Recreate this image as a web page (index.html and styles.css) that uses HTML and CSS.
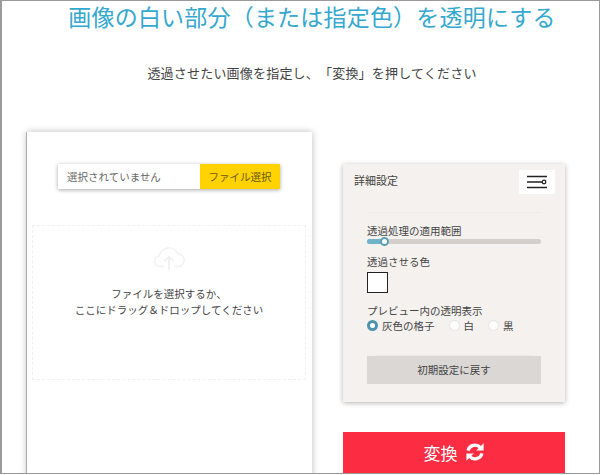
FILE: index.html
```html
<!DOCTYPE html>
<html lang="ja">
<head>
<meta charset="utf-8">
<title>画像の白い部分を透明にする</title>
<link rel="stylesheet" href="styles.css">
</head>
<body>
<div class="frame">
  <h1 class="title">画像の白い部分（または指定色）を透明にする</h1>
  <p class="lead">透過させたい画像を指定し、「変換」を押してください</p>
  <div class="columns">
    <section class="card">
      <div class="picker">
        <span class="picker-name">選択されていません</span>
        <span class="picker-btn">ファイル選択</span>
      </div>
      <div class="drop">
        <svg class="cloud" width="34" height="25" viewBox="0 0 36 28" fill="none" stroke="#f0f0f0" stroke-width="1.6">
          <path d="M12 23H8a6 6 0 0 1-1-11.9A11 11 0 0 1 28 9a7 7 0 0 1 0 14h-4"/>
          <path d="M18 27V13M13 17l5-5 5 5" stroke-width="2"/>
        </svg>
        <p class="drop-text">ファイルを選択するか、<br>ここにドラッグ＆ドロップしてください</p>
      </div>
    </section>
    <aside class="side">
      <div class="panel">
        <div class="panel-head">
          <span class="panel-title">詳細設定</span>
          <span class="toggle">
            <svg width="20" height="14" viewBox="0 0 20 14" fill="none" stroke="#222" stroke-width="1.3">
              <path d="M0 1.5H20M0 7H15M0 12.5H20"/>
              <circle cx="17" cy="7" r="1.8"/>
            </svg>
          </span>
        </div>
        <div class="panel-body">
          <div class="field-label">透過処理の適用範囲</div>
          <div class="slider"><span class="slider-fill"></span><span class="slider-knob"></span></div>
          <div class="field-label color-label">透過させる色</div>
          <div class="swatch"></div>
          <div class="field-label preview-label">プレビュー内の透明表示</div>
          <div class="radios">
            <span class="radio"><i class="dot on"></i>灰色の格子</span>
            <span class="radio"><i class="dot"></i>白</span>
            <span class="radio"><i class="dot"></i>黒</span>
          </div>
          <div class="reset">初期設定に戻す</div>
        </div>
      </div>
      <div class="convert">変換
        <svg width="20" height="20" viewBox="0 0 20 20" fill="none" stroke="#fff" stroke-width="3.2">
          <path d="M3 8.6A7.2 7.2 0 0 1 15.4 5.6"/>
          <path d="M17 11.4A7.2 7.2 0 0 1 4.6 14.4"/>
          <path d="M18.6 1.2v7.4h-7.4z" fill="#fff" stroke="none"/>
          <path d="M1.4 18.8v-7.4h7.4z" fill="#fff" stroke="none"/>
        </svg>
      </div>
    </aside>
  </div>
</div>
</body>
</html>
```
FILE: styles.css
```css
* { box-sizing: border-box; }
html, body { margin: 0; height: 475px; overflow: hidden; background: #fff; }
body {
  font-family: "Noto Sans CJK JP", "Noto Sans", sans-serif;
  color: #444;
  text-spacing-trim: space-all;
}
.frame {
  height: 474px;
  border: 1px solid #9a9a9a;
  border-left-width: 2px;
  overflow: hidden;
}
.title {
  margin: 0;
  padding-left: 23px;
  height: 30px;
  font-size: 23px;
  line-height: 30px;
  font-weight: 400;
  letter-spacing: .2px;
  text-align: center;
  color: #34a8cf;
}
.lead {
  margin: 33px 0 0;
  padding-left: 23px;
  font-size: 13px;
  line-height: 18px;
  letter-spacing: .2px;
  text-align: center;
  color: #444;
}
.columns {
  display: flex;
  align-items: flex-start;
  margin-top: 50px;
  padding-left: 25px;
}
.card {
  width: 285px;
  height: 345px;
  background: #fff;
  box-shadow: 0 0 7px rgba(0,0,0,.28), -1px 0 0 #c4c4c4;
  padding: 32px 5px 0;
}
.picker {
  display: flex;
  width: 222px;
  height: 25px;
  margin-left: 26px;
  box-shadow: 0 1px 4px rgba(0,0,0,.35);
  font-size: 10.5px;
  line-height: 25px;
}
.picker-name { flex: 1; padding-left: 9px; color: #666; }
.picker-btn { width: 80px; background: #ffd200; color: #6a5a10; text-align: center; }
.drop {
  width: 274px;
  height: 155px;
  margin-top: 36px;
  border: 1px dashed #f0f0f0;
  display: flex;
  flex-direction: column;
  align-items: center;
}
.cloud { margin-top: 20px; }
.drop-text {
  margin: 15px 0 0;
  font-size: 10.5px;
  line-height: 16px;
  text-align: center;
  color: #444;
}
.side { margin-left: 31px; width: 222px; padding-top: 32px; }
.panel {
  height: 238px;
  background: #f5f1ee;
  box-shadow: 0 1px 5px rgba(0,0,0,.3);
}
.panel-head {
  display: flex;
  justify-content: space-between;
  align-items: flex-start;
  height: 48px;
  padding: 6px 10px 0 11px;
  font-size: 11px;
  color: #444;
}
.panel-title { line-height: 21px; }
.toggle {
  width: 36px;
  height: 24px;
  background: #fff;
  display: flex;
  align-items: center;
  justify-content: center;
}
.panel-body {
  margin: 0 24px;
  border-top: 1px solid #eee9e5;
  padding-top: 10px;
  font-size: 10.5px;
  line-height: 15px;
}
.field-label { color: #444; }
.slider {
  position: relative;
  height: 5px;
  margin-top: 1px;
  background: #d4cfcb;
  border-radius: 3px;
}
.slider-fill { display: block; width: 17px; height: 5px; background: #6fb3c9; border-radius: 3px 0 0 3px; }
.slider-knob {
  position: absolute;
  left: 13px;
  top: -2px;
  width: 9px;
  height: 9px;
  border-radius: 50%;
  background: #fff;
  border: 2px solid #5a9fb8;
}
.color-label { margin-top: 10px; }
.swatch {
  width: 21px;
  height: 21px;
  margin-top: 3px;
  background: #fff;
  border: 1px solid #222;
}
.preview-label { margin-top: 10px; }
.radios { display: flex; gap: 14px; }
.radio { display: flex; align-items: center; gap: 4px; color: #444; }
.dot {
  width: 11px;
  height: 11px;
  border-radius: 50%;
  background: #fff;
  border: 1px solid #e6e2df;
}
.dot.on { border: 3px solid #4f93ad; }
.reset {
  height: 28px;
  margin-top: 23px;
  background: #dbd7d4;
  text-align: center;
  line-height: 27px;
  color: #444;
  box-shadow: 0 -9px 0 -8px #eee9e5;
}
.convert {
  margin-top: 30px;
  height: 43px;
  padding-bottom: 3px;
  background: #fc2c43;
  color: #fff;
  font-size: 17px;
  display: flex;
  align-items: center;
  justify-content: center;
  gap: 7px;
}
```
